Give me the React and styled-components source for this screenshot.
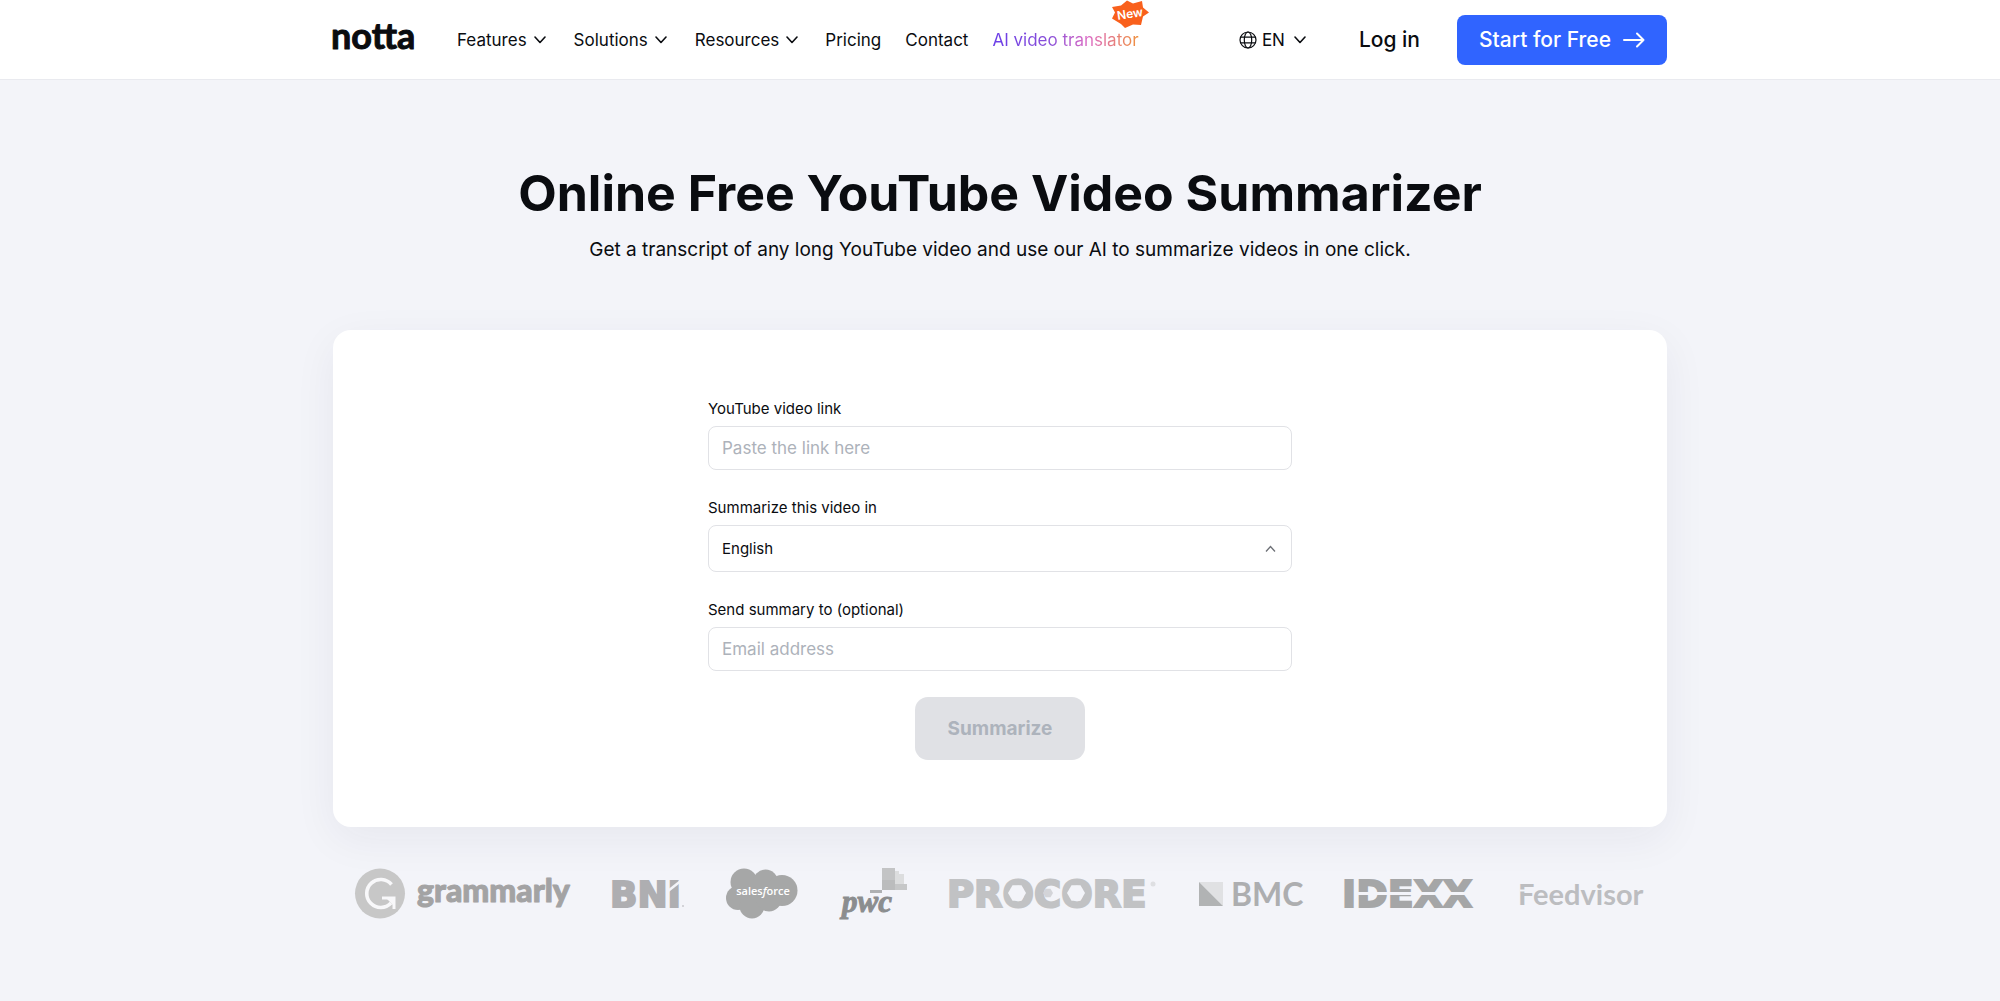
import React, { useState } from "react";
import styled, { createGlobalStyle } from "styled-components";

const GlobalStyle = createGlobalStyle`
  *, *::before, *::after { box-sizing: border-box; }
  body {
    margin: 0;
    background: #f3f4f9;
    color: #0a0c10;
    font-family: Inter, "Liberation Sans", sans-serif;
    -webkit-font-smoothing: antialiased;
  }
  button, input, select { font-family: inherit; }
`;

const Header = styled.header`
  background: #fff;
  border-bottom: 1px solid #e9eaef;
`;

const Container = styled.div`
  width: 100%;
  max-width: 1334px;
  margin: 0 auto;
`;

const Bar = styled(Container)`
  display: flex;
  align-items: center;
  height: 79px;
`;

const LogoLink = styled.a`
  display: flex;
  margin-right: 37px;
`;

const Nav = styled.nav`
  display: flex;
  align-items: center;
  gap: ${(p) => p.$gap}px;
  & + & { margin-left: 27px; }
`;

const NavButton = styled.button`
  display: flex;
  align-items: center;
  gap: ${(p) => p.$gap || 8}px;
  padding: 0;
  border: 0;
  background: none;
  color: inherit;
  font-size: 17px;
  line-height: 24px;
  cursor: pointer;
`;

const NavLink = styled.a`
  color: inherit;
  font-size: 17px;
  line-height: 24px;
  text-decoration: none;
`;

const TranslatorLink = styled(NavLink)`
  position: relative;
`;

const GradientText = styled.span`
  background: linear-gradient(90deg, #6a3de8 0%, #8a4fd8 40%, #dd6cc4 66%, #f0913c 100%);
  background-clip: text;
  -webkit-background-clip: text;
  color: transparent;
`;

const NewBadge = styled.svg`
  position: absolute;
  right: -10px;
  top: -28px;
`;

const Actions = styled.div`
  display: flex;
  align-items: center;
  margin-left: auto;
`;

const LanguageButton = styled(NavButton)`
  margin-right: 53px;
  & > svg:last-child { margin-left: 4px; }
`;

const LoginLink = styled.a`
  margin-right: 37px;
  color: inherit;
  font-size: 21px;
  font-weight: 500;
  line-height: 28px;
  text-decoration: none;
`;

const StartButton = styled.button`
  display: flex;
  align-items: center;
  gap: 12px;
  height: 50px;
  padding: 0 22px;
  border: 0;
  border-radius: 8px;
  background: #3064ff;
  color: #fff;
  font-size: 21px;
  font-weight: 500;
  cursor: pointer;
`;

const Hero = styled.main`
  padding: 80px 0;
`;

const Title = styled.h1`
  margin: 0;
  font-size: 50px;
  font-weight: 700;
  line-height: 66px;
  text-align: center;
`;

const Subtitle = styled.p`
  margin: 10px 0 66px;
  font-size: 19px;
  line-height: 28px;
  text-align: center;
`;

const Card = styled.section`
  display: flex;
  justify-content: center;
  padding: 67px 24px;
  border-radius: 18px;
  background: #fff;
  box-shadow: 0 12px 44px rgba(40, 40, 70, 0.06);
`;

const Form = styled.form`
  display: flex;
  flex-direction: column;
  gap: 26px;
  width: 100%;
  max-width: 584px;
`;

const Field = styled.div`
  display: flex;
  flex-direction: column;
  gap: 5px;
`;

const Label = styled.label`
  font-size: 15px;
  line-height: 24px;
`;

const TextInput = styled.input`
  width: 100%;
  height: 44px;
  padding: 0 13px;
  border: 1px solid #e1e2e6;
  border-radius: 8px;
  background: #fff;
  color: inherit;
  font-size: 17px;
  &::placeholder { color: #adb2ba; opacity: 1; }
`;

const SelectBox = styled.div`
  position: relative;
`;

const Select = styled.select`
  display: block;
  appearance: none;
  width: 100%;
  height: 47px;
  padding: 0 13px;
  border: 1px solid #e1e2e6;
  border-radius: 8px;
  background: #fff;
  color: inherit;
  font-size: 15px;
`;

const SelectArrow = styled.svg`
  position: absolute;
  right: 16px;
  top: 20px;
  pointer-events: none;
`;

const SubmitButton = styled.button`
  align-self: center;
  width: 170px;
  height: 63px;
  border: 0;
  border-radius: 13px;
  background: #e0e1e5;
  color: #adb3bc;
  font-size: 19px;
  font-weight: 700;
`;

const Brands = styled.ul`
  display: flex;
  align-items: center;
  justify-content: space-between;
  margin: 41px 0 0;
  padding: 0 22px;
  list-style: none;
`;

const Brand = styled.li`
  display: flex;
`;

const BrandArt = styled.svg`
  display: block;
  overflow: visible;
`;

const NottaLogo = () => (
  <svg width="87" height="26" viewBox="0 0 87 26" role="img" aria-label="notta" overflow="visible">
    <text
      x="-2" y="22" fontFamily="Lato, sans-serif" fontSize="36" fontWeight="700"
      fill="#0a0c10" stroke="#0a0c10" strokeWidth="1" strokeLinejoin="round"
    >notta</text>
  </svg>
);

const Chevron = () => (
  <svg width="12" height="8" viewBox="0 0 12 8" fill="none" stroke="#0a0c10" strokeWidth="1.6" strokeLinecap="round" strokeLinejoin="round" aria-hidden="true">
    <path d="M1 1l5 5.500L11 1" />
  </svg>
);

const Globe = () => (
  <svg width="18" height="18" viewBox="0 0 18 18" fill="none" stroke="#0a0c10" strokeWidth="1.2" aria-hidden="true">
    <circle cx="9" cy="9" r="8" />
    <ellipse cx="9" cy="9" rx="3.7" ry="8" />
    <path d="M1.600 6.200h14.800M1.600 11.800h14.800" />
  </svg>
);

const Arrow = () => (
  <svg width="22" height="16" viewBox="0 0 22 16" fill="none" stroke="#fff" strokeWidth="2" strokeLinecap="round" strokeLinejoin="round" aria-hidden="true">
    <path d="M1 8h19.5M14 1.5L20.5 8 14 14.5" />
  </svg>
);

const Badge = () => (
  <NewBadge width="38" height="28" viewBox="0 0 38 28">
    <path d="M1 7l9-1.500L16 .500l6 3 9-2.500 1 6.500 6 5-6 4-2 8.500-8-.500-8 3.500-4-4L1 18.500l3-6z" fill="#f9601c" />
    <text x="19" y="18" textAnchor="middle" transform="rotate(-9 19 14)" fill="#fff" fontFamily="Inter, sans-serif" fontSize="12" fontWeight="600">New</text>
  </NewBadge>
);

const Grammarly = () => (
  <BrandArt width="214" height="51" viewBox="0 0 214 51" role="img" aria-label="grammarly">
    <circle cx="25" cy="25.500" r="25" fill="#c7c7c7" />
    <path d="M36.500 16.500A14 14 0 1 0 36 35" fill="none" stroke="#f8f8fa" strokeWidth="3.600" />
    <path d="M27 30h12v11" fill="none" stroke="#f8f8fa" strokeWidth="3" />
    <path d="M31 30h8v8z" fill="#f8f8fa" />
    <text x="62" y="34" fontFamily="Lato, sans-serif" fontSize="32" fontWeight="900" fill="#a3a3a4" stroke="#a3a3a4" strokeWidth="1" strokeLinejoin="round">grammarly</text>
  </BrandArt>
);

const Bni = () => (
  <BrandArt width="72" height="28" viewBox="0 0 72 28" role="img" aria-label="BNI">
    <text x="-2" y="27" fontFamily='"DejaVu Sans", sans-serif' fontSize="36" fontWeight="700" fill="#aeaeb1" stroke="#aeaeb1" strokeWidth="2">BNI</text>
    <path d="M56 11L70 0" stroke="#f3f4f9" strokeWidth="2.500" />
    <circle cx="71" cy="26" r="1" fill="#c8c8cc" />
  </BrandArt>
);

const Salesforce = () => (
  <BrandArt width="72" height="51" viewBox="0 0 72 51" role="img" aria-label="salesforce">
    <g fill="#a6a7a7">
      <circle cx="18" cy="14" r="13.500" />
      <circle cx="39.500" cy="14" r="12.500" />
      <circle cx="56" cy="22.500" r="15.500" />
      <circle cx="12" cy="30" r="12" />
      <circle cx="26" cy="38" r="12.500" />
      <circle cx="43" cy="31" r="12.500" />
      <path d="M12 14h40v20H12z" />
    </g>
    <text x="37" y="27" textAnchor="middle" fontFamily='"Open Sans", sans-serif' fontSize="11" fontWeight="600" fill="#fff">sales<tspan fontStyle="italic">f</tspan>orce</text>
  </BrandArt>
);

const Pwc = () => (
  <BrandArt width="66" height="51" viewBox="0 0 66 51" role="img" aria-label="pwc">
    <path d="M29 22h12v3H29z" fill="#aeb0b2" />
    <path d="M41 0h13v22H41z" fill="#c3c4c5" />
    <path d="M54 3h4v3h5v10h-9z" fill="#dcddde" />
    <path d="M41 12h13v10H41z" fill="#bbbcbd" />
    <path d="M54 16h12v6H54z" fill="#c6c7c8" />
    <text x="1" y="44" fontFamily='"Liberation Serif", serif' fontSize="31" fontWeight="700" fontStyle="italic" fill="#8b8d8f" stroke="#8b8d8f" strokeWidth="1">pwc</text>
  </BrandArt>
);

const hexagon = (x, y, r) =>
  [[-r, 0], [-r / 2, -r * 0.87], [r / 2, -r * 0.87], [r, 0], [r / 2, r * 0.87], [-r / 2, r * 0.87]]
    .map(([dx, dy]) => `${x + dx},${y + dy}`)
    .join(" ");

const Procore = () => (
  <BrandArt width="207" height="26" viewBox="0 0 207 26" role="img" aria-label="PROCORE">
    <text x="-2" y="26" fontFamily='"DejaVu Sans", sans-serif' fontSize="37" fontWeight="700" fill="#c1c2c4" stroke="#c1c2c4" strokeWidth="2">PROCORE</text>
    <polygon points={hexagon(68, 12, 9)} fill="#f3f4f9" />
    <polygon points={hexagon(127, 12, 9)} fill="#f3f4f9" />
    <polygon points={hexagon(99, 12, 5)} fill="#d3d4d8" />
    <circle cx="204" cy="3" r="2.500" fill="#dedfe2" />
  </BrandArt>
);

const Bmc = () => (
  <BrandArt width="103" height="26" viewBox="0 0 103 26" role="img" aria-label="BMC">
    <path d="M0 1h24v24z" fill="#e0e1e3" />
    <path d="M0 1l24 24H0z" fill="#b1b3b4" />
    <text x="32" y="25" fontFamily="Lato, sans-serif" fontSize="32" fontWeight="700" fill="#adaeb0">BMC</text>
  </BrandArt>
);

const Idexx = () => (
  <BrandArt width="133" height="26" viewBox="0 0 133 26" role="img" aria-label="IDEXX">
    <text x="-2" y="26" fontFamily='"DejaVu Sans", sans-serif' fontSize="38" fontWeight="700" fill="#a5a6a7" stroke="#a5a6a7" strokeWidth="2">IDEXX</text>
    <path d="M12 12.500h121" stroke="#f3f4f9" strokeWidth="3" />
  </BrandArt>
);

const Feedvisor = () => (
  <BrandArt width="125" height="26" viewBox="0 0 125 26" role="img" aria-label="Feedvisor">
    <text x="-2" y="24" fontFamily="Lato, sans-serif" fontSize="29" fontWeight="700" fill="#bcbdc0">Feedvisor</text>
    <path d="M0 9.500h5" stroke="#f3f4f9" strokeWidth="2" />
  </BrandArt>
);

const brands = [Grammarly, Bni, Salesforce, Pwc, Procore, Bmc, Idexx, Feedvisor];

export default function App() {
  const [link, setLink] = useState("");
  const [email, setEmail] = useState("");

  return (
    <>
      <GlobalStyle />
      <Header>
        <Bar>
          <LogoLink href="#"><NottaLogo /></LogoLink>
          <Nav $gap={28}>
            {["Features", "Solutions", "Resources"].map((name) => (
              <NavButton type="button" key={name} $gap={7}>{name}<Chevron /></NavButton>
            ))}
          </Nav>
          <Nav $gap={24}>
            <NavLink href="#pricing">Pricing</NavLink>
            <NavLink href="#contact">Contact</NavLink>
            <TranslatorLink href="#translator">
              <GradientText>AI video translator</GradientText>
              <Badge />
            </TranslatorLink>
          </Nav>
          <Actions>
            <LanguageButton type="button" $gap={5}><Globe />EN<Chevron /></LanguageButton>
            <LoginLink href="#login">Log in</LoginLink>
            <StartButton type="button">Start for Free<Arrow /></StartButton>
          </Actions>
        </Bar>
      </Header>
      <Hero>
        <Container>
          <Title>Online Free YouTube Video Summarizer</Title>
          <Subtitle>Get a transcript of any long YouTube video and use our AI to summarize videos in one click.</Subtitle>
          <Card>
            <Form onSubmit={(e) => e.preventDefault()}>
              <Field>
                <Label htmlFor="video-link">YouTube video link</Label>
                <TextInput id="video-link" type="url" placeholder="Paste the link here" value={link} onChange={(e) => setLink(e.target.value)} />
              </Field>
              <Field>
                <Label htmlFor="language">Summarize this video in</Label>
                <SelectBox>
                  <Select id="language" defaultValue="English">
                    <option>English</option>
                  </Select>
                  <SelectArrow width="11" height="8" viewBox="0 0 11 8" fill="none" stroke="#6d7076" strokeWidth="1.300" aria-hidden="true">
                    <path d="M1 6.500l4.500-5 4.500 5" />
                  </SelectArrow>
                </SelectBox>
              </Field>
              <Field>
                <Label htmlFor="email">Send summary to (optional)</Label>
                <TextInput id="email" type="email" placeholder="Email address" value={email} onChange={(e) => setEmail(e.target.value)} />
              </Field>
              <SubmitButton type="submit" disabled={!link}>Summarize</SubmitButton>
            </Form>
          </Card>
          <Brands>
            {brands.map((Logo, i) => (
              <Brand key={i}><Logo /></Brand>
            ))}
          </Brands>
        </Container>
      </Hero>
    </>
  );
}
